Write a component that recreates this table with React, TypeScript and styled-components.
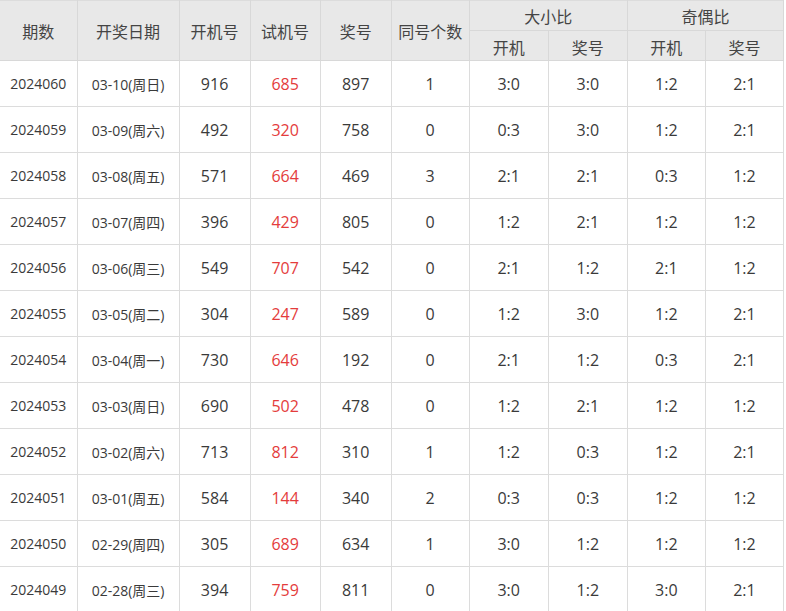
import React from "react";
import styled, { createGlobalStyle } from "styled-components";

const GlobalStyle = createGlobalStyle`
  html, body {
    margin: 0;
    padding: 0;
    background: #ffffff;
  }
  body {
    font-family: "Open Sans", "Noto Sans CJK SC", sans-serif;
    color: #333333;
  }
`;

interface DrawRow {
  issue: string;
  date: string;
  open: string;
  trial: string;
  prize: string;
  same: number;
  sizeOpen: string;
  sizePrize: string;
  parityOpen: string;
  parityPrize: string;
}

const rows: DrawRow[] = [
  { issue: "2024060", date: "03-10(周日)", open: "916", trial: "685", prize: "897", same: 1, sizeOpen: "3:0", sizePrize: "3:0", parityOpen: "1:2", parityPrize: "2:1" },
  { issue: "2024059", date: "03-09(周六)", open: "492", trial: "320", prize: "758", same: 0, sizeOpen: "0:3", sizePrize: "3:0", parityOpen: "1:2", parityPrize: "2:1" },
  { issue: "2024058", date: "03-08(周五)", open: "571", trial: "664", prize: "469", same: 3, sizeOpen: "2:1", sizePrize: "2:1", parityOpen: "0:3", parityPrize: "1:2" },
  { issue: "2024057", date: "03-07(周四)", open: "396", trial: "429", prize: "805", same: 0, sizeOpen: "1:2", sizePrize: "2:1", parityOpen: "1:2", parityPrize: "1:2" },
  { issue: "2024056", date: "03-06(周三)", open: "549", trial: "707", prize: "542", same: 0, sizeOpen: "2:1", sizePrize: "1:2", parityOpen: "2:1", parityPrize: "1:2" },
  { issue: "2024055", date: "03-05(周二)", open: "304", trial: "247", prize: "589", same: 0, sizeOpen: "1:2", sizePrize: "3:0", parityOpen: "1:2", parityPrize: "2:1" },
  { issue: "2024054", date: "03-04(周一)", open: "730", trial: "646", prize: "192", same: 0, sizeOpen: "2:1", sizePrize: "1:2", parityOpen: "0:3", parityPrize: "2:1" },
  { issue: "2024053", date: "03-03(周日)", open: "690", trial: "502", prize: "478", same: 0, sizeOpen: "1:2", sizePrize: "2:1", parityOpen: "1:2", parityPrize: "1:2" },
  { issue: "2024052", date: "03-02(周六)", open: "713", trial: "812", prize: "310", same: 1, sizeOpen: "1:2", sizePrize: "0:3", parityOpen: "1:2", parityPrize: "2:1" },
  { issue: "2024051", date: "03-01(周五)", open: "584", trial: "144", prize: "340", same: 2, sizeOpen: "0:3", sizePrize: "0:3", parityOpen: "1:2", parityPrize: "1:2" },
  { issue: "2024050", date: "02-29(周四)", open: "305", trial: "689", prize: "634", same: 1, sizeOpen: "3:0", sizePrize: "1:2", parityOpen: "1:2", parityPrize: "1:2" },
  { issue: "2024049", date: "02-28(周三)", open: "394", trial: "759", prize: "811", same: 0, sizeOpen: "3:0", sizePrize: "1:2", parityOpen: "3:0", parityPrize: "2:1" },
];

const colWidths = [77, 102, 71, 70, 71, 78, 79, 79, 78, 78];

const Table = styled.table`
  width: 784px;
  border-collapse: collapse;
  table-layout: fixed;
  border-top: 1px solid #dcdcdc;
`;

const Head = styled.th<{ $tall?: boolean }>`
  background: #e8e8e8;
  color: #444444;
  font-size: 16px;
  font-weight: normal;
  text-align: center;
  vertical-align: middle;
  height: ${({ $tall }) => ($tall ? "30px" : "29px")};
  padding: 0;
  border-right: 1px solid #d8d8d8;
  border-bottom: 1px solid #d8d8d8;
`;

const SubHead = styled(Head)`
  padding-top: 3px;
  height: 26px;
`;

const Cell = styled.td<{ $small?: boolean; $red?: boolean }>`
  height: 45px;
  padding: 0;
  text-align: center;
  vertical-align: middle;
  font-size: ${({ $small }) => ($small ? "14px" : "16px")};
  color: ${({ $red }) => ($red ? "#e43c3c" : "#3a3a3a")};
  border-right: 1px solid #dcdcdc;
  border-bottom: 1px solid #dcdcdc;
`;

const LeadCell = styled(Cell)`
  padding-bottom: 0;
`;

export default function App() {
  return (
    <>
      <GlobalStyle />
      <Table>
        <colgroup>
          {colWidths.map((w, i) => (
            <col key={i} style={{ width: w }} />
          ))}
        </colgroup>
        <thead>
          <tr>
            <Head rowSpan={2}>期数</Head>
            <Head rowSpan={2}>开奖日期</Head>
            <Head rowSpan={2}>开机号</Head>
            <Head rowSpan={2}>试机号</Head>
            <Head rowSpan={2}>奖号</Head>
            <Head rowSpan={2}>同号个数</Head>
            <Head colSpan={2}>大小比</Head>
            <Head colSpan={2}>奇偶比</Head>
          </tr>
          <tr>
            <SubHead>开机</SubHead>
            <SubHead>奖号</SubHead>
            <SubHead>开机</SubHead>
            <SubHead>奖号</SubHead>
          </tr>
        </thead>
        <tbody>
          {rows.map((r) => (
            <tr key={r.issue}>
              <LeadCell $small>{r.issue}</LeadCell>
              <Cell $small>{r.date}</Cell>
              <Cell>{r.open}</Cell>
              <Cell $red>{r.trial}</Cell>
              <Cell>{r.prize}</Cell>
              <Cell>{r.same}</Cell>
              <Cell>{r.sizeOpen}</Cell>
              <Cell>{r.sizePrize}</Cell>
              <Cell>{r.parityOpen}</Cell>
              <Cell>{r.parityPrize}</Cell>
            </tr>
          ))}
        </tbody>
      </Table>
    </>
  );
}
